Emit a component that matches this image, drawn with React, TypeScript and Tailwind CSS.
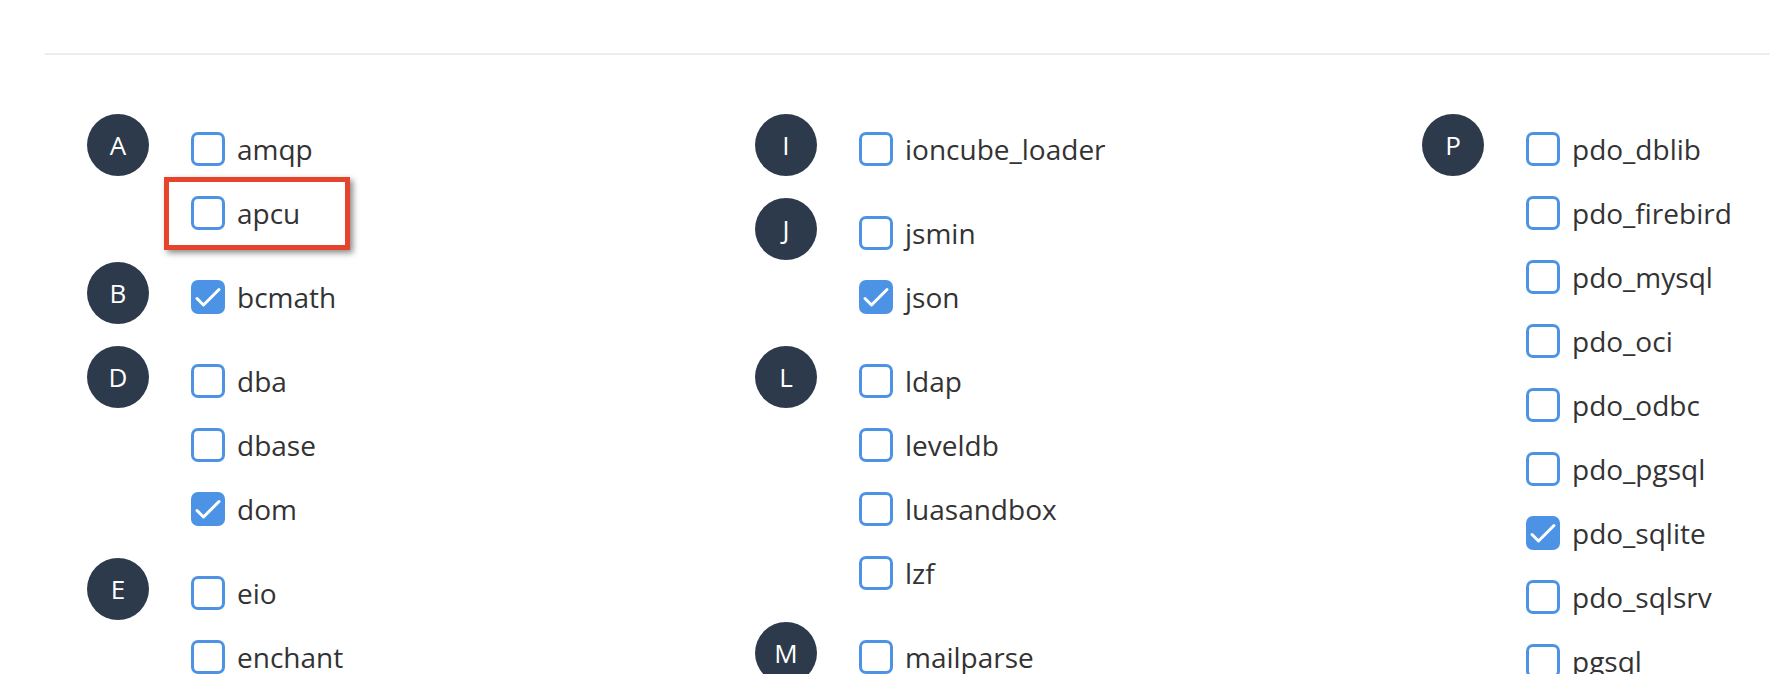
import React from 'react'

interface Ext {
    name: string;
    checked?: boolean;
}

interface Group {
    letter: string;
    items: Ext[];
}

const columns: Group[][] = [
    [
        { letter: 'A', items: [{ name: 'amqp' }, { name: 'apcu' }] },
        { letter: 'B', items: [{ name: 'bcmath', checked: true }] },
        { letter: 'D', items: [{ name: 'dba' }, { name: 'dbase' }, { name: 'dom', checked: true }] },
        { letter: 'E', items: [{ name: 'eio' }, { name: 'enchant' }] },
    ],
    [
        { letter: 'I', items: [{ name: 'ioncube_loader' }] },
        { letter: 'J', items: [{ name: 'jsmin' }, { name: 'json', checked: true }] },
        { letter: 'L', items: [{ name: 'ldap' }, { name: 'leveldb' }, { name: 'luasandbox' }, { name: 'lzf' }] },
        { letter: 'M', items: [{ name: 'mailparse' }] },
    ],
    [
        {
            letter: 'P',
            items: [
                { name: 'pdo_dblib' },
                { name: 'pdo_firebird' },
                { name: 'pdo_mysql' },
                { name: 'pdo_oci' },
                { name: 'pdo_odbc' },
                { name: 'pdo_pgsql' },
                { name: 'pdo_sqlite', checked: true },
                { name: 'pdo_sqlsrv' },
                { name: 'pgsql' },
            ],
        },
    ],
];

const CheckBox: React.FC<{ checked?: boolean }> = ({ checked }) => {
    if (checked) {
        return (
            <div className="w-[34px] h-[34px] shrink-0 rounded-[7px] bg-[#4d93e5]">
                <svg viewBox="0 0 34 34" className="w-[34px] h-[34px]">
                    <polyline points="6,18.5 12.5,25 28,9.5" fill="none" stroke="white" strokeWidth="3" strokeLinecap="round" strokeLinejoin="round" />
                </svg>
            </div>
        );
    }
    return <div className="w-[34px] h-[34px] shrink-0 rounded-[7px] border-[3px] border-[#4d93e5] bg-white" />;
};

const LetterGroup: React.FC<{ group: Group }> = ({ group }) => (
    <div className="flex mb-[20px]">
        <div className="w-[62px] h-[62px] -mt-[3px] shrink-0 rounded-full bg-[#2d3a4b] text-white text-[26px] flex items-center justify-center">
            {group.letter}
        </div>
        <div className="ml-[42px] flex flex-col">
            {group.items.map((ext) => (
                <label key={ext.name} className="h-[64px] flex items-center gap-[12px] text-[28px] text-[#333333] whitespace-nowrap">
                    <CheckBox checked={ext.checked} />
                    <span>{ext.name}</span>
                </label>
            ))}
        </div>
    </div>
);

export default function App() {
    return (
        <div className="relative w-[1770px] h-[674px] overflow-hidden bg-white" style={{ fontFamily: '"Open Sans", "Noto Sans", sans-serif' }}>
            <div className="ml-[45px] mt-[53px] h-[2px] bg-[#ededed]" />
            <div className="pl-[87px] pt-[62px] grid grid-cols-[668px_667px_667px]">
                {columns.map((col, i) => (
                    <div key={i} className="flex flex-col">
                        {col.map((g) => (
                            <LetterGroup key={g.letter} group={g} />
                        ))}
                    </div>
                ))}
            </div>
            {/* highlight annotation round apcu */}
            <div className="absolute left-[164px] top-[177px] w-[186px] h-[73px] border-[5px] border-[#e5432b] shadow-[3px_3px_6px_rgba(0,0,0,0.45)]" />
        </div>
    );
}
